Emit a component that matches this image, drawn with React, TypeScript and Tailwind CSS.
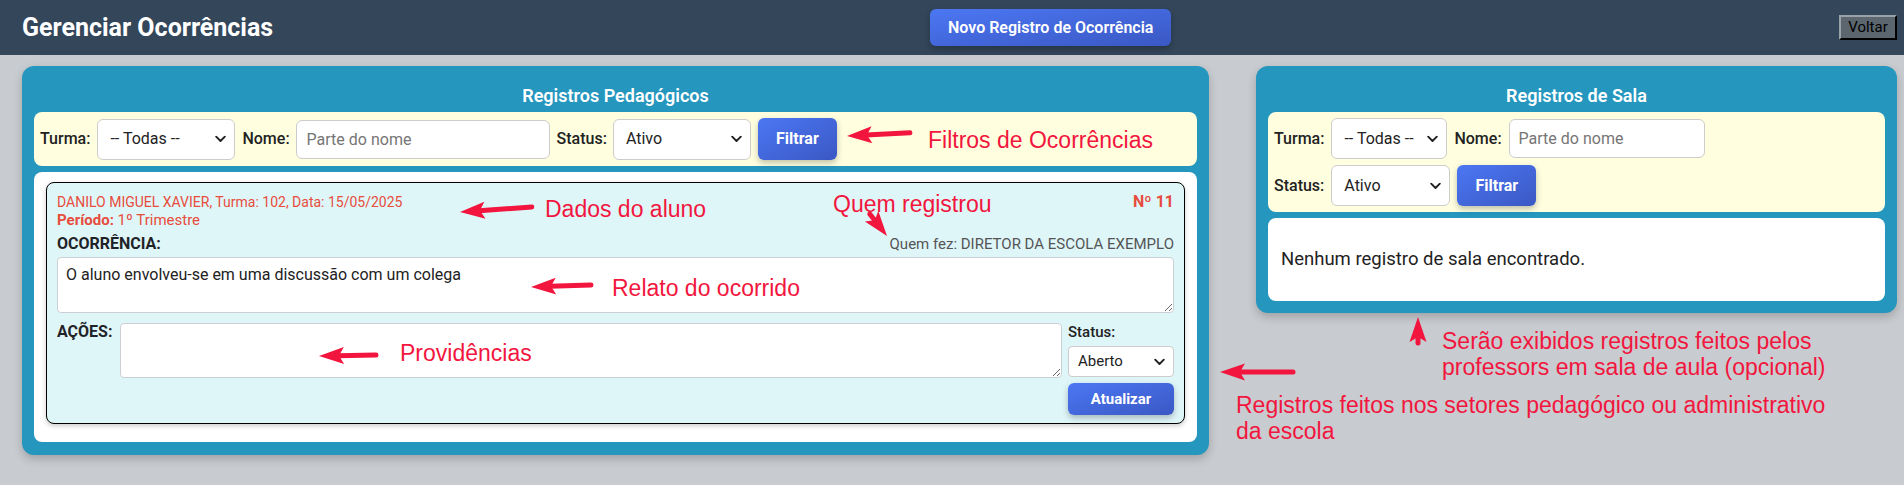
import React from "react";

function Chevron() {
  return (
    <svg
      className="pointer-events-none absolute right-[9px] top-1/2 -translate-y-1/2"
      width="11"
      height="7"
      viewBox="0 0 11 7"
    >
      <path d="M1.2 1.2L5.5 5.5L9.8 1.2" fill="none" stroke="#222" strokeWidth="1.9" strokeLinecap="round" strokeLinejoin="round" />
    </svg>
  );
}

function Select({ value, className }: { value: string; className: string }) {
  return (
    <div className={"relative " + className}>
      <select
        defaultValue={value}
        className="h-full w-full appearance-none rounded-[6px] border border-[#ccc] bg-white pl-[12px] text-[16px] text-[#222] outline-none"
      >
        <option>{value}</option>
      </select>
      <Chevron />
    </div>
  );
}

function Label({ children }: { children: React.ReactNode }) {
  return <span className="text-[16px] font-medium text-[#222]">{children}</span>;
}

function BlueButton({ children, className }: { children: React.ReactNode; className: string }) {
  return (
    <button
      className={
        "rounded-[6px] bg-linear-to-br from-[#4c77f3] to-[#3a58c4] font-bold text-white shadow-[0_3px_6px_rgba(0,0,0,0.25)] " +
        className
      }
    >
      {children}
    </button>
  );
}

function Arrow({ len, className }: { len: number; className: string }) {
  return (
    <svg className={"absolute origin-left " + className} width={len} height={18} viewBox={`0 0 ${len} 18`}>
      <path d="M0 9 L25 0.5 L20 9 L25 17.5 Z" fill="#f2163e" />
      <line x1="19" y1="9" x2={len - 3} y2="9" stroke="#f2163e" strokeWidth="5" strokeLinecap="round" />
    </svg>
  );
}

const note = "absolute font-['Liberation_Sans',Arial,sans-serif] text-[23px] leading-[26px] text-[#f2163e] whitespace-nowrap";

export default function App() {
  return (
    <div className="relative min-h-[485px] bg-[#c8cbcf] font-['Roboto','Noto_Sans',sans-serif] text-[#222]">
      <header className="flex h-[55px] items-center bg-[#33465a] pl-[22px] pr-[7px]">
        <h1 className="w-[908px] text-[25px] font-bold text-white">Gerenciar Ocorrências</h1>
        <BlueButton className="h-[37px] px-[18px] text-[16px] font-semibold">Novo Registro de Ocorrência</BlueButton>
        <button className="ml-auto h-[25px] w-[58px] border-2 border-t-[#9aa1a8] border-l-[#9aa1a8] border-r-black border-b-black bg-[#5b666f] text-[15px] leading-none text-black">
          Voltar
        </button>
      </header>

      <main className="flex items-start gap-[47px] pl-[22px] pr-[7px] pt-[11px]">
        {/* Left panel */}
        <section className="w-[1187px] rounded-[12px] bg-[#2596be] px-[12px] pb-[13px] pt-[12px] shadow-[0_4px_10px_rgba(0,0,0,0.2)]">
          <h2 className="flex h-[34px] items-center justify-center text-[18px] font-semibold text-white">
            Registros Pedagógicos
          </h2>
          <div className="flex flex-wrap items-center gap-[7px] rounded-[8px] bg-[#ffffe0] p-[6px]">
            <div className="flex items-center gap-[7px]">
              <Label>Turma:</Label>
              <Select value="-- Todas --" className="h-[41px] w-[138px]" />
            </div>
            <div className="flex items-center gap-[6px]">
              <Label>Nome:</Label>
              <input
                placeholder="Parte do nome"
                className="h-[39px] w-[254px] rounded-[6px] border border-[#ccc] bg-white px-[10px] text-[16px] outline-none placeholder:text-[#757575]"
              />
            </div>
            <div className="flex items-center gap-[6px]">
              <Label>Status:</Label>
              <Select value="Ativo" className="h-[41px] w-[138px]" />
            </div>
            <BlueButton className="h-[42px] w-[79px] text-[16px]">Filtrar</BlueButton>
          </div>

          <div className="mt-[6px] rounded-[8px] bg-white px-[12px] pb-[18px] pt-[10px]">
            <div className="rounded-[8px] border border-black bg-[#dff6f9] px-[10px] pb-[8px] pt-[10px] shadow-[0_2px_5px_rgba(0,0,0,0.2)]">
              <div className="flex items-start justify-between">
                <div className="text-[14px] leading-[18px] text-[#e74c3c]">
                  <div>DANILO MIGUEL XAVIER, Turma: 102, Data: 15/05/2025</div>
                  <div className="text-[15px]">
                    <span className="font-bold">Período:</span> 1º Trimestre
                  </div>
                </div>
                <div className="text-[16px] font-bold leading-[18px] text-[#e74c3c]">Nº 11</div>
              </div>
              <div className="mt-[6px] flex items-end justify-between leading-[18px]">
                <span className="text-[16px] font-bold text-[#1f2328]">OCORRÊNCIA:</span>
                <span className="text-[15px] text-[#555]">Quem fez: DIRETOR DA ESCOLA EXEMPLO</span>
              </div>
              <textarea
                defaultValue="O aluno envolveu-se em uma discussão com um colega"
                className="mt-[4px] block h-[56px] w-full rounded-[4px] border border-[#ccd0d5] bg-white px-[8px] py-[7px] text-[16px] leading-[19px] text-[#222] outline-none"
              />
              <div className="mt-[10px] flex items-start">
                <span className="w-[55px] text-[16px] font-bold leading-[18px] text-[#1f2328]">AÇÕES:</span>
                <textarea className="ml-[8px] block h-[55px] flex-1 rounded-[4px] border border-[#ccd0d5] bg-white px-[8px] py-[7px] text-[16px] outline-none" />
                <div className="ml-[6px] flex w-[106px] flex-col">
                  <span className="text-[15px] font-medium leading-[18px] text-[#222]">Status:</span>
                  <div className="relative mt-[5px] h-[31px] w-full">
                    <select
                      defaultValue="Aberto"
                      className="h-full w-full appearance-none rounded-[4px] border border-[#ccc] bg-white pl-[9px] text-[15px] text-[#222] outline-none"
                    >
                      <option>Aberto</option>
                    </select>
                    <Chevron />
                  </div>
                  <BlueButton className="mt-[6px] h-[32px] w-full text-[15px]">Atualizar</BlueButton>
                </div>
              </div>
            </div>
          </div>
        </section>

        {/* Right panel */}
        <section className="w-[641px] rounded-[12px] bg-[#2596be] px-[12px] pb-[12px] pt-[12px] shadow-[0_4px_10px_rgba(0,0,0,0.2)]">
          <h2 className="flex h-[34px] items-center justify-center text-[18px] font-semibold text-white">
            Registros de Sala
          </h2>
          <div className="flex flex-wrap items-center gap-x-[7px] gap-y-[6px] rounded-[8px] bg-[#ffffe0] p-[6px]">
            <div className="flex items-center gap-[7px]">
              <Label>Turma:</Label>
              <Select value="-- Todas --" className="h-[41px] w-[116px]" />
            </div>
            <div className="flex items-center gap-[7px]">
              <Label>Nome:</Label>
              <input
                placeholder="Parte do nome"
                className="h-[39px] w-[196px] rounded-[6px] border border-[#ccc] bg-white px-[9px] text-[16px] outline-none placeholder:text-[#757575]"
              />
            </div>
            <div className="flex items-center gap-[7px]">
              <Label>Status:</Label>
              <Select value="Ativo" className="h-[41px] w-[119px]" />
            </div>
            <BlueButton className="h-[41px] w-[79px] text-[16px]">Filtrar</BlueButton>
          </div>
          <div className="mt-[6px] flex h-[83px] items-center rounded-[8px] bg-white px-[13px] text-[18.5px] text-[#222]">
            Nenhum registro de sala encontrado.
          </div>
        </section>
      </main>

      {/* Annotations */}
      <Arrow len={66} className="left-[847px] top-[127px] rotate-[-3deg]" />
      <span className={note + " left-[928px] top-[127px]"}>Filtros de Ocorrências</span>

      <Arrow len={75} className="left-[460px] top-[203px] rotate-[-4deg]" />
      <span className={note + " left-[545px] top-[196px]"}>Dados do aluno</span>

      <span className={note + " left-[833px] top-[191px]"}>Quem registrou</span>
      <Arrow len={31} className="left-[887px] top-[227px] rotate-[-128deg]" />

      <Arrow len={63} className="left-[531px] top-[278px] rotate-[-2deg]" />
      <span className={note + " left-[612px] top-[275px]"}>Relato do ocorrido</span>

      <Arrow len={60} className="left-[319px] top-[347px] rotate-[-1deg]" />
      <span className={note + " left-[400px] top-[340px]"}>Providências</span>

      <Arrow len={29} className="left-[1418px] top-[308px] rotate-[90deg]" />
      <span className={note + " left-[1442px] top-[328px]"}>
        Serão exibidos registros feitos pelos
        <br />
        professors em sala de aula (opcional)
      </span>

      <Arrow len={76} className="left-[1220px] top-[363px]" />
      <span className={note + " left-[1236px] top-[392px]"}>
        Registros feitos nos setores pedagógico ou administrativo
        <br />
        da escola
      </span>
    </div>
  );
}
